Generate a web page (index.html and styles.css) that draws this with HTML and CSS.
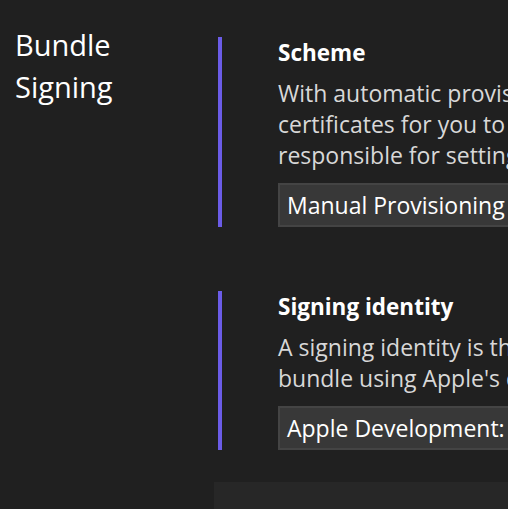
FILE: index.html
```html
<!DOCTYPE html>
<html lang="en">
<head>
    <meta charset="UTF-8">
    <meta name="viewport" content="width=device-width, initial-scale=1.0">
    <title>Bundle Signing</title>
    <link rel="stylesheet" href="styles.css">
</head>
<body>
    <div class="page">
        <div class="side">
            <h1>Bundle<br>Signing</h1>
        </div>

        <div class="main">
            <div class="setting">
                <h3>Scheme</h3>
                <p>With automatic provisioning, Visual Studio creates and manages signing<br>certificates for you to use when building your app. With manual provisioning, you are<br>responsible for setting up the certificates and provisioning profiles yourself.</p>
                <div class="select">Manual Provisioning</div>
            </div>

            <div class="setting">
                <h3>Signing identity</h3>
                <p>A signing identity is the certificate and private key used to sign the app<br>bundle using Apple's codesign tool.</p>
                <div class="select">Apple Development: Developer Account (XXXXXXXXXX)</div>
            </div>

            <div class="footer"></div>
        </div>
    </div>
</body>
</html>
```

FILE: styles.css
```css
/* General Styles */
body {
    margin: 0;
    padding: 0;
    background-color: #202020;
    color: #ffffff;
    font-family: "Open Sans", sans-serif;
    overflow: hidden;
}

.page {
    display: flex;
    width: 1000px;
}

.side {
    width: 214px;
    flex-shrink: 0;
}

.side h1 {
    margin: 24px 0 0 15px;
    font-size: 29px;
    font-weight: normal;
    line-height: 42px;
}

.main {
    flex: 1;
    padding-top: 35px;
}

.setting {
    margin-left: 4px;
    border-left: 4px solid #6b5ce7;
    padding-left: 56px;
}

.setting + .setting {
    margin-top: 64px;
}

.setting h3 {
    margin: 2px 0 9px 0;
    font-size: 22.5px;
    font-weight: bold;
    line-height: 32px;
}

.setting p {
    margin: 0 0 12px 0;
    font-size: 23px;
    line-height: 31px;
    color: #d8d8d8;
    white-space: nowrap;
}

.select {
    width: 500px;
    height: 40px;
    line-height: 40px;
    padding: 0 7px;
    background: #383838;
    border: 2px solid #444444;
    font-size: 23px;
    white-space: nowrap;
}

.footer {
    height: 40px;
    margin-top: 32px;
    background: #272727;
}
```
